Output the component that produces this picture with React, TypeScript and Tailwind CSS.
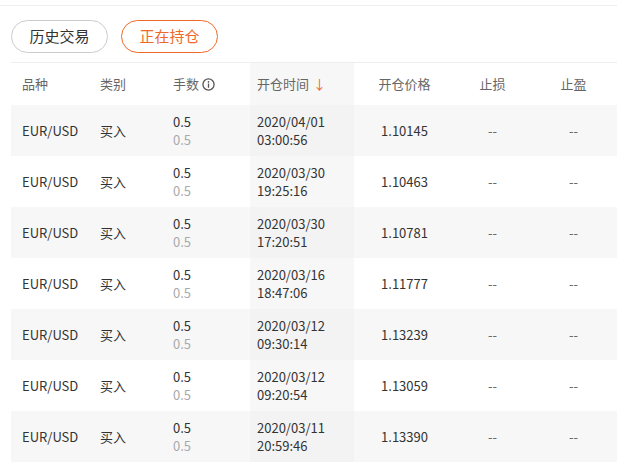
const rows = [
  ["2020/04/01", "03:00:56", "1.10145"],
  ["2020/03/30", "19:25:16", "1.10463"],
  ["2020/03/30", "17:20:51", "1.10781"],
  ["2020/03/16", "18:47:06", "1.11777"],
  ["2020/03/12", "09:30:14", "1.13239"],
  ["2020/03/12", "09:20:54", "1.13059"],
  ["2020/03/11", "20:59:46", "1.13390"],
];

export default function App() {
  return (
    <div className="w-[617px] h-[474px] bg-white overflow-hidden text-[13px] text-[#333]" style={{ fontFamily: '"Noto Sans CJK SC", "Noto Sans", sans-serif' }}>
      <div className="h-[6px] border-b border-[#eee]" />
      <div className="flex gap-[13px] pl-[11px] pt-[14px] pb-[9px]">
        <button className="w-[97px] h-[33px] rounded-full border border-[#ccc] text-[15px] text-[#333]">历史交易</button>
        <button className="w-[97px] h-[33px] rounded-full border border-[#ee6a2a] text-[15px] text-[#ee6a2a]">正在持仓</button>
      </div>
      <div className="ml-[11px] border-t border-[#eee]">
        <div className="flex h-[42px] items-center text-[#666]">
          <div className="w-[79px] pl-[11px]">品种</div>
          <div className="w-[72px] pl-[10px]">类别</div>
          <div className="w-[88px] pl-[11px] flex items-center gap-[3px]">手数
            <svg width="13" height="13" viewBox="0 0 14 14"><circle cx="7" cy="7" r="6" fill="none" stroke="#555" strokeWidth="1.4"/><circle cx="7" cy="4.2" r="0.9" fill="#555"/><rect x="6.3" y="6" width="1.4" height="4.5" fill="#555"/></svg>
          </div>
          <div className="w-[104px] h-full bg-[#f7f7f7] pl-[7px] flex items-center gap-[4px]">开仓时间<span className="text-[#ee6a2a]">↓</span></div>
          <div className="w-[101px] text-center">开仓价格</div>
          <div className="w-[75px] text-center">止损</div>
          <div className="w-[87px] text-center">止盈</div>
        </div>
        {rows.map((r, i) => (
          <div key={i} className={`flex h-[51px] items-center ${i % 2 === 0 ? "bg-[#f7f7f7]" : "bg-white"}`}>
            <div className="w-[79px] pl-[11px]">EUR/USD</div>
            <div className="w-[72px] pl-[10px]">买入</div>
            <div className="w-[88px] pl-[11px] leading-[18px]"><div>0.5</div><div className="text-[#aaa]">0.5</div></div>
            <div className={`w-[104px] h-full pl-[7px] flex flex-col justify-center leading-[18px] ${i % 2 === 0 ? "bg-[#f3f3f3]" : "bg-[#f7f7f7]"}`}><div>{r[0]}</div><div>{r[1]}</div></div>
            <div className="w-[101px] text-center">{r[2]}</div>
            <div className="w-[75px] text-center text-[#666]">--</div>
            <div className="w-[87px] text-center text-[#666]">--</div>
          </div>
        ))}
      </div>
    </div>
  );
}
